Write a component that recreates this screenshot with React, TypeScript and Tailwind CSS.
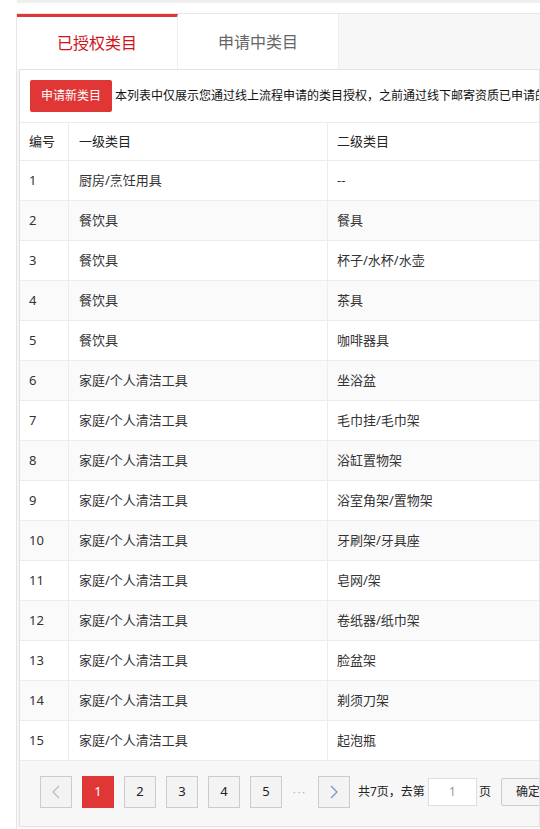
import React from 'react';

const rows: [string, string][] = [
  ['厨房/烹饪用具', '--'],
  ['餐饮具', '餐具'],
  ['餐饮具', '杯子/水杯/水壶'],
  ['餐饮具', '茶具'],
  ['餐饮具', '咖啡器具'],
  ['家庭/个人清洁工具', '坐浴盆'],
  ['家庭/个人清洁工具', '毛巾挂/毛巾架'],
  ['家庭/个人清洁工具', '浴缸置物架'],
  ['家庭/个人清洁工具', '浴室角架/置物架'],
  ['家庭/个人清洁工具', '牙刷架/牙具座'],
  ['家庭/个人清洁工具', '皂网/架'],
  ['家庭/个人清洁工具', '卷纸器/纸巾架'],
  ['家庭/个人清洁工具', '脸盆架'],
  ['家庭/个人清洁工具', '剃须刀架'],
  ['家庭/个人清洁工具', '起泡瓶'],
];

const Chevron = ({ dir, color }: { dir: 'left' | 'right'; color: string }) => (
  <svg width="8" height="14" viewBox="0 0 8 14" fill="none">
    <polyline
      points={dir === 'left' ? '7,1 1,7 7,13' : '1,1 7,7 1,13'}
      stroke={color}
      strokeWidth="1.2"
    />
  </svg>
);

const PageBtn = ({ children, active }: { children: React.ReactNode; active?: boolean }) => (
  <div
    className={
      active
        ? 'w-[32px] h-[32px] shrink-0 flex items-center justify-center bg-[#e03636] text-white text-[13px]'
        : 'w-[32px] h-[32px] shrink-0 flex items-center justify-center border border-[#cccccc] bg-[#f3f3f3] text-[#222] text-[13px]'
    }
  >
    {children}
  </div>
);

export default function App() {
  return (
    <div
      className="w-[540px] h-[829px] overflow-hidden bg-white text-[#333]"
      style={{ fontFamily: '"Noto Sans", "Noto Sans CJK SC", sans-serif' }}
    >
      {/* top strip */}
      <div className="ml-[17px] h-[3px] bg-[#efefef]" />

      <div className="ml-4 mt-[10px] border-l border-t border-[#e6e6e6] pb-[2px]">
        {/* tabs */}
        <div className="flex h-[55px]">
          <div className="w-[161px] border-t-[3px] border-[#e03636] bg-white border-r border-r-[#eeeeee] flex items-center justify-center text-[16px] text-[#d0121b]">
            已授权类目
          </div>
          <div className="w-[161px] bg-white border-r border-[#eeeeee] flex items-center justify-center text-[16px] text-[#666]">
            申请中类目
          </div>
          <div className="flex-1 bg-[#f7f7f7]" />
        </div>

        {/* panel */}
        <div className="ml-[2px] border border-[#e3e3e3] shadow-[-1px_0_2px_rgba(0,0,0,0.08)] bg-white">
          {/* toolbar */}
          <div className="flex items-center pl-[10px] pt-[10px] pb-[10px] border-b border-[#ececec] whitespace-nowrap overflow-hidden">
            <button className="h-[32px] px-[11px] rounded-[2px] bg-[#e03636] text-white text-[12px] shrink-0">
              申请新类目
            </button>
            <span className="ml-[3px] text-[12px] text-[#111]">
              本列表中仅展示您通过线上流程申请的类目授权，之前通过线下邮寄资质已申请的类目授权请联系客服查询
            </span>
          </div>

          {/* table */}
          <div className="grid grid-cols-[49px_259px_1fr] text-[13px]">
            <div className="h-[38px] flex items-center pl-[9px] border-r border-b border-[#ececec] text-[#222]">编号</div>
            <div className="h-[38px] flex items-center pl-[10px] border-r border-b border-[#ececec] text-[#222]">一级类目</div>
            <div className="h-[38px] flex items-center pl-[9px] border-b border-[#ececec] text-[#222] whitespace-nowrap">二级类目</div>
            {rows.map(([a, b], i) => {
              const bg = i % 2 === 1 ? 'bg-[#fafafa]' : 'bg-white';
              return (
                <React.Fragment key={i}>
                  <div className={`h-[40px] flex items-center pl-[9px] border-r border-b border-[#ececec] ${bg}`}>{i + 1}</div>
                  <div className={`h-[40px] flex items-center pl-[10px] border-r border-b border-[#ececec] ${bg}`}>{a}</div>
                  <div className={`h-[40px] flex items-center pl-[9px] border-b border-[#ececec] whitespace-nowrap ${bg}`}>{b}</div>
                </React.Fragment>
              );
            })}
          </div>

          {/* pagination */}
          <div className="h-[65px] bg-[#f7f7f7] flex items-center pl-[20px] pb-[3px] whitespace-nowrap overflow-hidden text-[12px] text-[#222]">
            <div className="flex items-center gap-[10px] shrink-0">
              <PageBtn>
                <Chevron dir="left" color="#bbbbbb" />
              </PageBtn>
              <PageBtn active>1</PageBtn>
              <PageBtn>2</PageBtn>
              <PageBtn>3</PageBtn>
              <PageBtn>4</PageBtn>
              <PageBtn>5</PageBtn>
            </div>
            <span className="w-[36px] shrink-0 text-center text-[#aaa] tracking-[2px] text-[10px]">···</span>
            <PageBtn>
              <Chevron dir="right" color="#6f93c8" />
            </PageBtn>
            <span className="ml-[8px] shrink-0">共7页，去第</span>
            <div className="ml-[3px] w-[49px] h-[28px] shrink-0 bg-white border border-[#dddddd] flex items-center justify-center text-[#999]">
              1
            </div>
            <span className="ml-[2px] shrink-0">页</span>
            <button className="ml-[10px] h-[28px] px-[14px] bg-[#f5f5f5] border border-[#cccccc] rounded-[2px] text-[12px] text-[#222] shrink-0">
              确定
            </button>
          </div>
        </div>
      </div>
    </div>
  );
}
